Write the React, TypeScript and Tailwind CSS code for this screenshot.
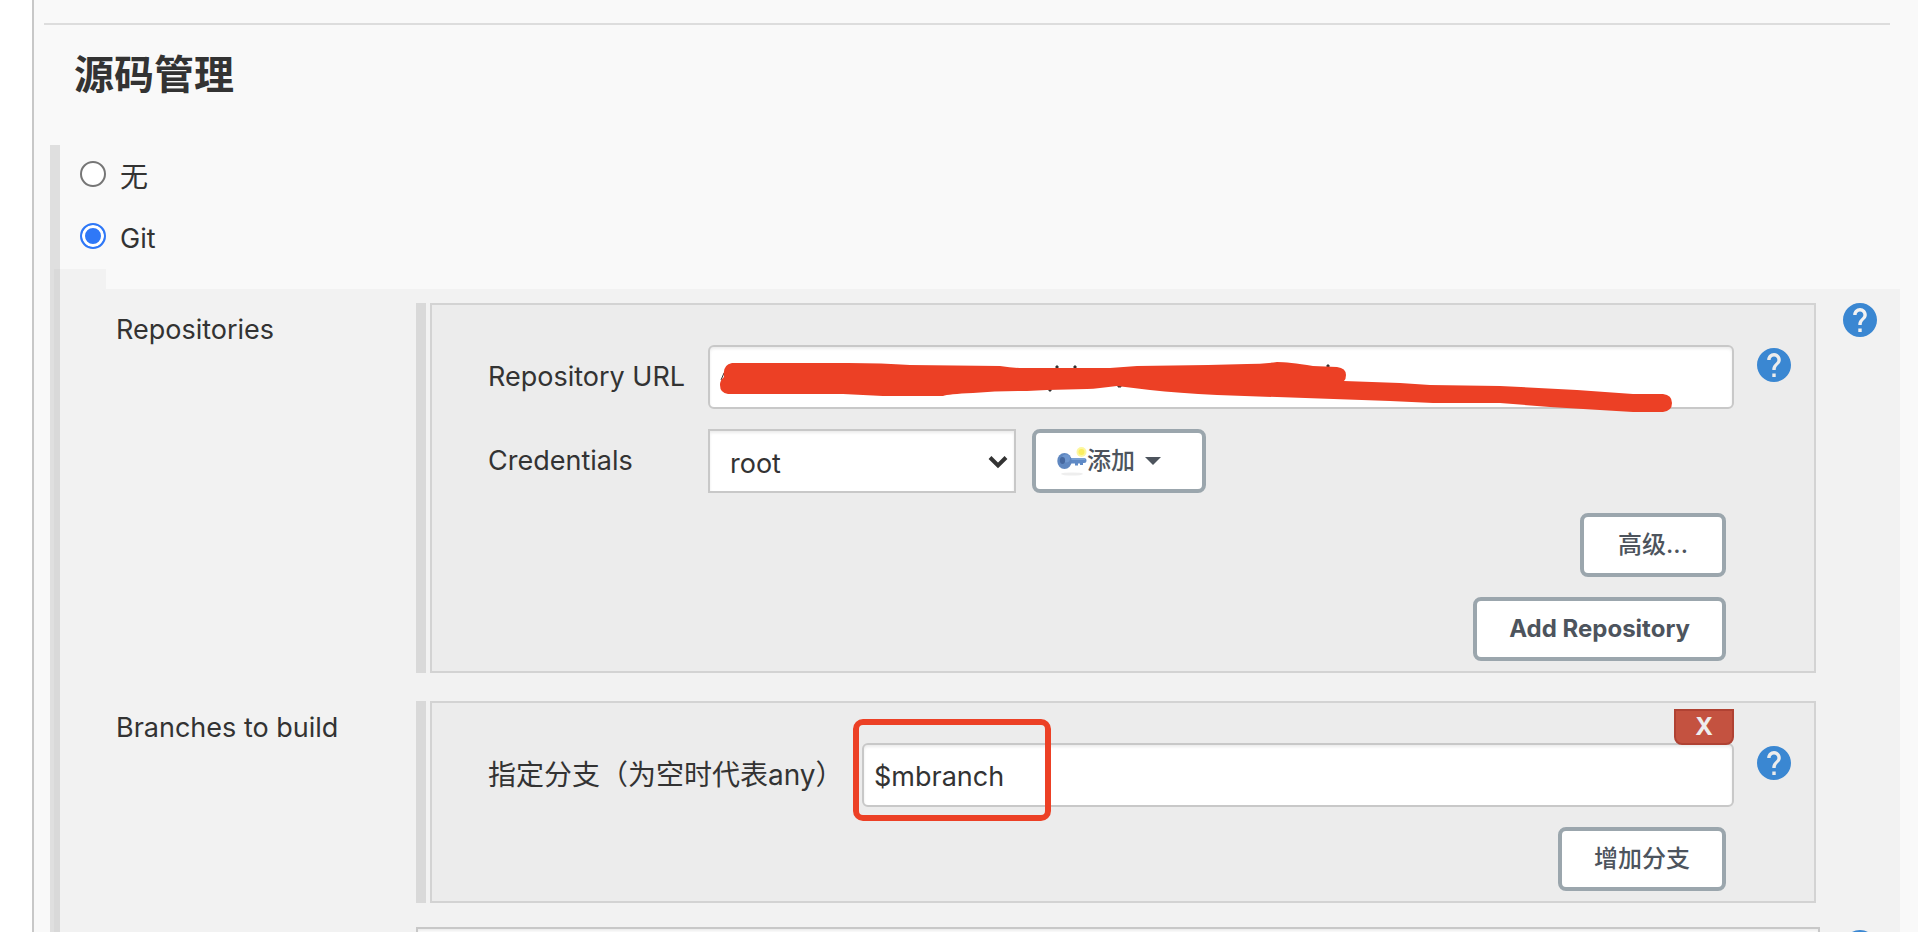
import type { ReactNode } from "react";

const HelpButton = ({ label }: { label: string }) => (
  <button type="button" aria-label={label} className="block size-[34px] shrink-0">
    <svg viewBox="2 2 20 20" className="size-full" aria-hidden="true">
      <path
        d="M12 2C6.48 2 2 6.48 2 12s4.480 10 10 10 10-4.480 10-10S17.520 2 12 2zm1 17h-2v-2h2v2zm2.070-7.750l-.900.920C13.450 12.900 13 13.500 13 15h-2v-.500c0-1.100.450-2.100 1.170-2.830l1.240-1.260c.370-.360.590-.860.590-1.410 0-1.100-.900-2-2-2s-2 .900-2 2H8c0-2.210 1.790-4 4-4s4 1.790 4 4c0 .880-.360 1.680-.930 2.250z"
        fill="#3a87d2"
      />
    </svg>
  </button>
);

const KeyIcon = () => (
  <svg viewBox="0 0 30 30" className="size-[30px]" aria-hidden="true">
    <ellipse cx="15" cy="28" rx="11" ry="1.600" fill="#eeeeee" />
    <circle cx="24.500" cy="6" r="5" fill="#fdf7a0" />
    <circle cx="24.500" cy="6" r="3" fill="#fbee60" />
    <path d="M11 12h16q2.500 0 2.500 2.500t-2.500 2.500h-1v2h-3v-1.500h-2v2h-3v-2h-7z" fill="#5f8ac6" />
    <path d="M13 13h15" stroke="#86a9d8" strokeWidth="1.400" />
    <ellipse cx="7.500" cy="15" rx="7.200" ry="8" fill="#5f87c0" />
    <ellipse cx="9" cy="12.500" rx="4" ry="4" fill="#6f97cf" />
    <ellipse cx="5.500" cy="14.500" rx="2.600" ry="3.400" fill="#46689f" />
  </svg>
);

const Button = ({ children, className = "" }: { children: ReactNode; className?: string }) => (
  <button
    type="button"
    className={`flex h-16 items-center rounded-lg border-4 border-[#9ba6ad] bg-white text-2xl text-[#4d545d] ${className}`}
  >
    {children}
  </button>
);

const Section = ({ title, children }: { title: string; children: ReactNode }) => (
  <div className="flex items-start">
    <h2 className="w-[300px] shrink-0 pt-[7px]">{title}</h2>
    <div className="flex min-w-0 flex-1 gap-1">
      <div className="w-2.5 shrink-0 bg-[#d9d9d9]" />
      <div className="min-w-0 flex-1 border-2 border-[#d3d3d3] bg-[#ececec]">{children}</div>
    </div>
    <div className="w-[84px] shrink-0 pl-[27px]">
      {title === "Repositories" && <HelpButton label="Help: Repositories" />}
    </div>
  </div>
);

const inputClass =
  "h-16 min-w-0 w-full rounded-md border-2 border-[#c8c8c8] bg-white px-2.5 pt-0.5 shadow-[inset_0_2px_3px_rgba(0,0,0,0.08)] outline-none";

const radioClass =
  "size-[26px] appearance-none rounded-full border-2 border-[#767676] bg-white checked:border-[#2f78f7] checked:bg-[#2f78f7] checked:shadow-[inset_0_0_0_3px_white]";

export default function App() {
  return (
    <div className="h-screen overflow-hidden bg-white pl-8 font-['Inter','Noto_Sans_CJK_SC',sans-serif] text-[27px] leading-10 text-[#333]">
      <main className="min-h-full border-l-2 border-[#c8c8c8] bg-[#f9f9f9] pt-[23px] pr-[18px]">
        <hr className="mr-2.5 ml-2.5 border-t-2 border-[#ddd]" />
        <h1 className="pt-5 pl-10 text-[40px] leading-[60px] font-bold">源码管理</h1>

        <div className="mt-10 ml-4 flex">
          <div className="w-1 shrink-0 bg-[#dfdfdf]" />
          <div className="min-w-0 flex-1">
            <fieldset className="border-l-[6px] border-[#dfdfdf] pt-3 pb-[3px] pl-5">
              <label className="flex h-[62px] items-start gap-3.5">
                <input type="radio" name="scm" className={`mt-1 ${radioClass}`} />
                <span className="text-[28px]">无</span>
              </label>
              <label className="flex h-[47px] items-start gap-3.5">
                <input type="radio" name="scm" defaultChecked className={`mt-1 ${radioClass}`} />
                <span>Git</span>
              </label>
            </fieldset>

            <div className="h-5 w-[52px] border-l-[6px] border-[#d9d9d9] bg-[#f2f2f2]" />
            <div className="flex flex-col gap-7 border-l-[6px] border-[#d9d9d9] bg-[#f2f2f2] pt-3.5 pl-14">
              <Section title="Repositories">
                <div className="flex flex-col gap-5 pt-10 pb-2.5 pl-14">
                  <div className="flex items-start">
                    <label htmlFor="url" className="w-[220px] shrink-0 pt-3">Repository URL</label>
                    <div className="relative min-w-0 flex-1">
                      <input id="url" type="text" className={inputClass} />
                      <svg viewBox="0 0 1026 68" className="pointer-events-none absolute top-0 left-0 h-[68px] w-full" preserveAspectRatio="none" aria-hidden="true">
                        <path d="M13 35l3-7M348 21h2v3h-2zM366 21h2v3h-2zM341 43h2v3h-2zM410 40h3v2h-3zM619 20h2v2h-2z" fill="#333" stroke="#333" />
                        <path
                          d="M24 18H140Q175 18 202 20L292 21Q305 23 315 23H402L429 21L500 20L539 19Q555 19 569 17Q580 17 605 21L629 22Q638 23 638 30Q638 34 636 36L692 38L722 40L792 41L869 45L925 49H955Q964 50 964 58T955 67L925 67L842 62L792 58L725 58L682 56L509 50Q470 48 442 45L409 41L392 43Q385 44 379 44L339 45L319 46Q290 46 265 48Q240 49 235 51H175L135 49H20Q12 48 12 40Q12 35 16 32Q14 20 24 18Z"
                          fill="#ec4025"
                        />
                      </svg>
                    </div>
                    <div className="w-20 shrink-0 pt-[3px] pl-[23px]">
                      <HelpButton label="Help: Repository URL" />
                    </div>
                  </div>

                  <div className="flex items-start">
                    <label htmlFor="credentials" className="w-[220px] shrink-0 pt-3">Credentials</label>
                    <div className="relative mr-4 w-[308px]">
                      <select id="credentials" className="h-16 w-full appearance-none border-2 border-[#c8c8c8] bg-white px-5 pt-1.5 shadow-[inset_0_2px_3px_rgba(0,0,0,0.08)]">
                        <option>root</option>
                      </select>
                      <svg viewBox="0 0 20 14" className="pointer-events-none absolute top-[26px] right-2 h-3.5 w-5" aria-hidden="true">
                        <path d="M2 2.500l8 8 8-8" fill="none" stroke="#333" strokeWidth="4" />
                      </svg>
                    </div>
                    <Button className="w-[174px] pl-[21px] font-medium">
                      <KeyIcon />
                      添加
                      <svg viewBox="0 0 16 8" className="ml-2.5 h-2 w-4" aria-hidden="true">
                        <path d="M0 0h16l-8 8z" fill="#4d545d" />
                      </svg>
                    </Button>
                  </div>

                  <div className="flex flex-col items-end gap-5 pr-[88px]">
                    <Button className="min-w-[146px] justify-center px-8 font-medium">高级...</Button>
                    <Button className="px-8 font-bold">Add Repository</Button>
                  </div>
                </div>
              </Section>

              <Section title="Branches to build">
                <div className="flex flex-col gap-5 pt-10 pb-2.5 pl-14">
                  <div className="flex items-start">
                    <label htmlFor="branch" className="w-[374px] shrink-0 pt-3 text-[28px]">指定分支（为空时代表any）</label>
                    <div className="relative min-w-0 flex-1">
                      <input id="branch" type="text" defaultValue="$mbranch" className={inputClass} />
                      <button type="button" aria-label="Delete branch" className="absolute -top-[34px] right-0 flex h-9 w-[60px] items-center justify-center rounded-b-lg border-2 border-[#b04233] bg-[#c45240] text-2xl font-bold text-[#eee]">
                        X
                      </button>
                      <div className="pointer-events-none absolute -top-6 -left-[9px] h-[102px] w-[198px] rounded-[10px] border-[6px] border-[#ec4025]" />
                    </div>
                    <div className="w-20 shrink-0 pt-[3px] pl-[23px]">
                      <HelpButton label="Help: Branch" />
                    </div>
                  </div>
                  <div className="flex justify-end pr-[88px]">
                    <Button className="px-8 font-medium">增加分支</Button>
                  </div>
                </div>
              </Section>

              <div className="-mt-1 flex items-start pl-[300px]">
                <select aria-label="Repository browser" className="h-16 min-w-0 flex-1 appearance-none border-2 border-[#c8c8c8] bg-white shadow-[inset_0_2px_3px_rgba(0,0,0,0.08)]" />
                <div className="w-20 shrink-0 pt-[3px] pl-[23px]">
                  <HelpButton label="Help: Repository browser" />
                </div>
              </div>
            </div>
          </div>
        </div>
      </main>
    </div>
  );
}
